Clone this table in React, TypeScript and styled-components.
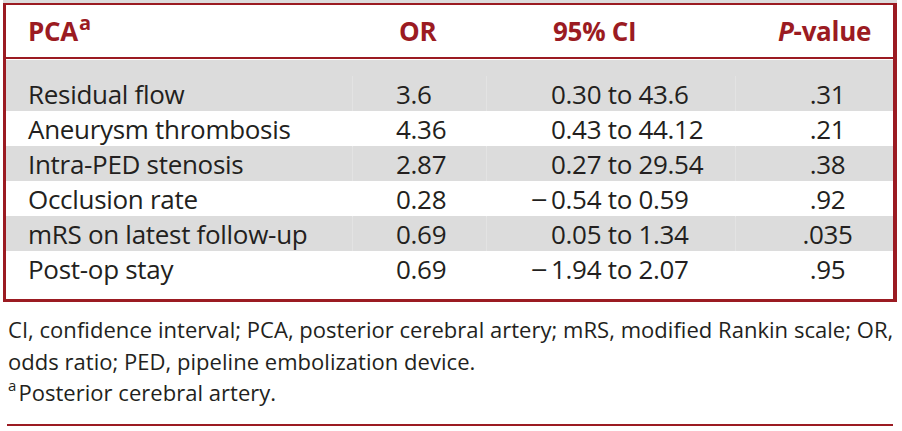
import React from "react";
import styled, { createGlobalStyle } from "styled-components";

const RED = "#9b1b22";
const TEXT = "#231f20";
const BAND = "#dcdcdc";

const Global = createGlobalStyle`
  html, body { margin: 0; padding: 0; background: #ffffff; }
  body { font-family: "Open Sans", "Noto Sans", sans-serif; color: ${TEXT}; }
`;

const Page = styled.div`
  width: 902px;
  height: 431px;
  overflow: hidden;
  display: flex;
  flex-direction: column;
`;

const TopStrip = styled.div`
  height: 3px;
  margin: 0 5px 0 3px;
  background: ${BAND};
`;

const Table = styled.div`
  margin-left: 3px;
  width: 887px;
  border-left: 3px solid ${RED};
  border-right: 4px solid ${RED};
  border-top: 2px solid ${RED};
  border-bottom: 3px solid ${RED};
  padding-bottom: 13px;
  background: #ffffff;
`;

const Row = styled.div<{ $shade?: boolean; $head?: boolean; $first?: boolean }>`
  display: grid;
  grid-template-columns: 346px 134px 249px 158px;
  height: ${(p) => (p.$head ? "54px" : p.$first ? "51px" : "35px")};
  padding-top: ${(p) => (p.$first ? "16px" : "0")};
  box-sizing: border-box;
  background: ${(p) => (p.$shade ? BAND : "#ffffff")};
  border-bottom: ${(p) => (p.$head ? `2px solid ${RED}` : "none")};
  font-size: 26px;
  font-weight: ${(p) => (p.$head ? 700 : 400)};
  color: ${(p) => (p.$head ? RED : TEXT)};
  margin-bottom: ${(p) => (p.$head ? "1px" : "0")};
`;

const Cell = styled.div<{ $pad: number; $align?: string; $sep?: boolean }>`
  display: flex;
  align-items: center;
  justify-content: ${(p) => p.$align || "flex-start"};
  padding-left: ${(p) => p.$pad}px;
  white-space: nowrap;
  letter-spacing: -0.3px;
  border-left: ${(p) => (p.$sep ? "1px solid rgba(255,255,255,0.2)" : "none")};
`;

const Label = styled.span`
  display: inline-block;
`;

const Sup = styled.sup`
  font-size: 20px;
  line-height: 0;
  position: relative;
  top: -1px;
  vertical-align: super;
  margin-left: 1px;
`;

const Minus = styled.span`
  font-family: "DejaVu Sans", sans-serif;
  font-size: 22px;
  margin-left: -21px;
  display: inline-block;
  width: 21px;
`;

const Footer = styled.div`
  margin-top: 12px;
  padding-left: 8px;
  font-size: 22px;
  line-height: 31.5px;
  color: ${TEXT};
  letter-spacing: 0.03px;
  white-space: nowrap;
`;

const FootSup = styled.sup`
  font-size: 15px;
  line-height: 0;
  vertical-align: 10px;
  margin-right: 2px;
`;

const Rule = styled.div`
  margin: 15px 9px 0 7px;
  height: 2px;
  background: ${RED};
`;

type R = { name: string; or: string; lo: string; hi: string; neg?: boolean; p: string };

const rows: R[] = [
  { name: "Residual flow", or: "3.6", lo: "0.30", hi: "43.6", p: ".31" },
  { name: "Aneurysm thrombosis", or: "4.36", lo: "0.43", hi: "44.12", p: ".21" },
  { name: "Intra-PED stenosis", or: "2.87", lo: "0.27", hi: "29.54", p: ".38" },
  { name: "Occlusion rate", or: "0.28", lo: "0.54", hi: "0.59", neg: true, p: ".92" },
  { name: "mRS on latest follow-up", or: "0.69", lo: "0.05", hi: "1.34", p: ".035" },
  { name: "Post-op stay", or: "0.69", lo: "1.94", hi: "2.07", neg: true, p: ".95" },
];

export default function App() {
  return (
    <Page>
      <Global />
      <TopStrip />
      <Table>
        <Row $head>
          <Cell $pad={22}>
            <Label>
              PCA<Sup>a</Sup>
            </Label>
          </Cell>
          <Cell $pad={47}>OR</Cell>
          <Cell $pad={67}>95% CI</Cell>
          <Cell $pad={43}>
            <Label>
              <i>P</i>-value
            </Label>
          </Cell>
        </Row>
        {rows.map((r, i) => (
          <Row key={r.name} $shade={i % 2 === 0} $first={i === 0}>
            <Cell $pad={22}>{r.name}</Cell>
            <Cell $pad={43} $sep>
              {r.or}
            </Cell>
            <Cell $pad={64} $sep>
              {r.neg && <Minus>−</Minus>}
              {r.lo} to {r.hi}
            </Cell>
            <Cell $pad={26} $align="center" $sep>
              {r.p}
            </Cell>
          </Row>
        ))}
      </Table>
      <Footer>
        CI, confidence interval; PCA, posterior cerebral artery; mRS, modified Rankin scale; OR,
        <br />
        odds ratio; PED, pipeline embolization device.
        <br />
        <FootSup>a</FootSup>Posterior cerebral artery.
      </Footer>
      <Rule />
    </Page>
  );
}
